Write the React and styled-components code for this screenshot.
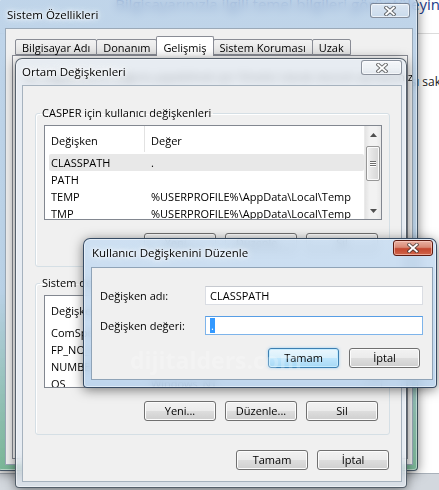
import React from 'react';
import styled, { createGlobalStyle, css } from 'styled-components';

const GlobalStyle = createGlobalStyle`
  html, body { margin: 0; padding: 0; background: #fff; }
  body {
    font-family: "Open Sans", "Noto Sans", sans-serif;
    font-size: 11px;
    color: #000;
  }
  * { box-sizing: border-box; }
`;

const Desktop = styled.div`
  position: relative;
  width: 439px;
  height: 490px;
  overflow: hidden;
  background: #fff;
`;

// page behind the dialogs
const BackPage = styled.div`
  height: 100%;
  display: flex;
  flex-direction: column;
`;

const PageHeading = styled.div`
  align-self: flex-end;
  white-space: nowrap;
  margin: -6px -1px 0 0;
  font-size: 15px;
  line-height: 20px;
  color: #1e3c8c;
`;

const PageRule = styled.div`
  height: 1px;
  margin-top: 19px;
  background: #dcdcdc;
`;

const PageNote = styled.div`
  align-self: flex-end;
  white-space: nowrap;
  margin: 40px -2px 0 0;
  font-size: 12px;
  line-height: 16px;
  color: #1a1a1a;
`;

const PageFill = styled.div`
  flex: 1;
`;

const PageBand = styled.div`
  height: 17px;
  background: #d3d8de;
  border-top: 1px solid #a9b1ba;
`;

const Frame = styled.div`
  position: absolute;
  left: ${p => p.$g.x}px;
  top: ${p => p.$g.y}px;
  width: ${p => p.$g.w}px;
  height: ${p => p.$g.h}px;
  display: flex;
  flex-direction: column;
  border: 1px solid ${p => p.$edge};
  border-radius: 7px 7px 4px 4px;
  background: ${p => p.$glass};
  backdrop-filter: blur(4px);
  box-shadow: inset 0 0 0 1px rgba(255, 255, 255, 0.45), 0 2px 12px rgba(0, 0, 0, 0.5);
`;

const TitleBar = styled.div`
  flex: none;
  height: ${p => p.$g.title}px;
  display: flex;
  align-items: flex-start;
  justify-content: space-between;
  padding: 0 ${p => p.$g.pr}px 0 ${p => p.$g.pl}px;
`;

const Caption = styled.div`
  margin-top: ${p => p.$top}px;
  font-size: 11.5px;
  line-height: 16px;
  white-space: nowrap;
  text-shadow: 0 0 8px #fff, 0 0 5px #fff, 0 0 3px #fff;
`;

const CloseButton = styled.div`
  flex: none;
  width: ${p => p.$w}px;
  height: ${p => p.$h}px;
  margin-top: ${p => p.$top}px;
  display: flex;
  align-items: center;
  justify-content: center;
  border-radius: 3px;
  ${p => p.$active
    ? css`
        border: 1px solid #5b1a10;
        background: linear-gradient(180deg, #eab1a3 0%, #d98a76 45%, #c4472f 55%, #d0654a 100%);
        box-shadow: inset 0 0 0 1px rgba(255, 210, 200, 0.6);
      `
    : css`
        border: 1px solid rgba(60, 70, 85, 0.55);
        background: linear-gradient(180deg, rgba(255, 255, 255, 0.55), rgba(235, 240, 245, 0.25));
        box-shadow: inset 0 0 0 1px rgba(255, 255, 255, 0.6);
      `}
`;

const Client = styled.div`
  flex: 1;
  min-height: 0;
  display: flex;
  flex-direction: column;
  margin: 0 ${p => p.$g.mr}px ${p => p.$g.mb}px ${p => p.$g.ml}px;
  background: #f0f0f0;
  border: 1px solid ${p => p.$line};
  overflow: hidden;
`;

const CloseGlyph = () => (
  <svg width="12" height="10" viewBox="0 0 12 10">
    <path d="M2.2 1.6 L9.8 8.4 M9.8 1.6 L2.2 8.4" stroke="#333" strokeOpacity="0.7" strokeWidth="3.8" strokeLinecap="square" />
    <path d="M2.2 1.6 L9.8 8.4 M9.8 1.6 L2.2 8.4" stroke="#fff" strokeWidth="1.9" strokeLinecap="square" />
  </svg>
);

const Win = ({ g, title, active, glass, edge, line, children }) => (
  <Frame $g={g} $glass={glass} $edge={edge}>
    <TitleBar $g={g}>
      <Caption $top={g.textTop}>{title}</Caption>
      <CloseButton $active={active} $w={g.closeW} $h={g.closeH} $top={g.closeTop}>
        <CloseGlyph />
      </CloseButton>
    </TitleBar>
    <Client $g={g} $line={line}>{children}</Client>
  </Frame>
);

/* ---------- Sistem Özellikleri ---------- */

const SysBody = styled.div`
  flex: 1;
  display: flex;
  flex-direction: column;
  padding: 7px 4px 5px 6px;
`;

const TabStrip = styled.div`
  display: flex;
  align-items: flex-end;
  height: 19px;
  padding-left: 4px;
`;

const Tab = styled.div`
  height: ${p => (p.$on ? 20 : 16)}px;
  margin-left: -1px;
  margin-bottom: ${p => (p.$on ? -1 : 0)}px;
  padding: ${p => (p.$on ? '1px 6px 0' : '0 6px')};
  display: flex;
  align-items: center;
  border: 1px solid #898c95;
  border-bottom: ${p => (p.$on ? 'none' : '1px solid #898c95')};
  border-radius: 2px 2px 0 0;
  background: ${p => (p.$on ? '#fff' : 'linear-gradient(180deg, #f2f2f2, #e3e3e3)')};
  position: relative;
  z-index: ${p => (p.$on ? 1 : 0)};
  white-space: nowrap;
`;

const TabPanel = styled.div`
  flex: 1;
  border: 1px solid #898c95;
  background: #fff;
  padding: 13px 12px;
  white-space: nowrap;
`;

/* ---------- Ortam Değişkenleri ---------- */

const EnvBody = styled.div`
  flex: 1;
  display: flex;
  flex-direction: column;
  padding: 19px 11px 0 12px;
`;

const Group = styled.fieldset`
  margin: 0 0 ${p => p.$gap || 0}px;
  padding: 4px 7px 13px 8px;
  border: 1px solid #d5dfe5;
  border-radius: 3px;
  box-shadow: inset 1px 1px 0 #fff;
  min-width: 0;
`;

const GroupLabel = styled.legend`
  margin-left: -4px;
  padding: 0 2px;
  line-height: 16px;
`;

const List = styled.div`
  height: ${p => p.$h}px;
  display: flex;
  border: 1px solid #828790;
  background: #fff;
  overflow: hidden;
`;

const ListMain = styled.div`
  flex: 1;
  min-width: 0;
  overflow: hidden;
`;

const ListHeader = styled.div`
  height: 26px;
  display: flex;
  align-items: stretch;
`;

const HeadCell = styled.div`
  width: ${p => (p.$first ? '100px' : 'auto')};
  flex: ${p => (p.$first ? 'none' : '1')};
  display: flex;
  align-items: flex-end;
  padding: 0 0 3px 6px;
  border-right: ${p => (p.$first ? '1px solid #e2e2e2' : 'none')};
  line-height: 16px;
`;

const Rows = styled.div`
  margin-top: 2px;
`;

const Row = styled.div`
  height: 17px;
  margin-left: 4px;
  display: flex;
  align-items: center;
  white-space: nowrap;
  background: ${p => (p.$sel ? '#e8e8e8' : 'transparent')};
  border-radius: 2px;
`;

const NameCell = styled.div`
  width: 96px;
  flex: none;
  padding-left: 2px;
  overflow: hidden;
`;

const ValueCell = styled.div`
  flex: 1;
  padding-left: 6px;
  overflow: hidden;
`;

const ScrollBar = styled.div`
  width: 17px;
  flex: none;
  display: flex;
  flex-direction: column;
  background: linear-gradient(90deg, #e3e3e3, #f2f2f2 30%, #f2f2f2 70%, #e8e8e8);
  border-left: 1px solid #eaeaea;
`;

const ScrollArrow = styled.div`
  height: 17px;
  flex: none;
  display: flex;
  align-items: center;
  justify-content: center;
`;

const ScrollTrack = styled.div`
  flex: 1;
  padding: 3px 1px 0;
`;

const Thumb = styled.div`
  height: 35px;
  border: 1px solid #979797;
  border-radius: 2px;
  background: linear-gradient(90deg, #f1f1f1, #e2e2e2 50%, #d6d6d6);
  box-shadow: inset 0 0 0 1px #fafafa;
  display: flex;
  flex-direction: column;
  align-items: center;
  justify-content: center;
  gap: 1px;
`;

const Grip = styled.div`
  width: 6px;
  height: 1px;
  background: #6d6d6d;
  box-shadow: 0 1px 0 #fff;
`;

const Arrow = ({ down }) => (
  <svg width="7" height="4" viewBox="0 0 7 4">
    <path d={down ? 'M0 0H7L3.5 4Z' : 'M0 4H7L3.5 0Z'} fill="#4f4f4f" />
  </svg>
);

const ButtonRow = styled.div`
  display: flex;
  justify-content: flex-end;
  gap: ${p => p.$gap}px;
  margin-top: ${p => p.$top}px;
  padding-right: ${p => p.$right}px;
`;

const Button = styled.div`
  width: ${p => p.$w || 72}px;
  height: 20px;
  display: flex;
  align-items: center;
  justify-content: center;
  border-radius: 3px;
  line-height: 16px;
  ${p => p.$default
    ? css`
        border: 1px solid #3c7fb1;
        background: linear-gradient(180deg, #eaf6fd 0%, #d9f0fc 48%, #bee6fd 52%, #a7d9f5 100%);
        box-shadow: inset 0 0 0 1px #c6ecff, 0 0 3px rgba(96, 180, 240, 0.6);
      `
    : css`
        border: 1px solid #707070;
        background: linear-gradient(180deg, #f2f2f2 0%, #ebebeb 48%, #dddddd 52%, #cfcfcf 100%);
        box-shadow: inset 0 0 0 1px #fcfcfc;
      `}
`;

/* ---------- Kullanıcı Değişkenini Düzenle ---------- */

const EditBody = styled.div`
  flex: 1;
  display: flex;
  flex-direction: column;
  padding: 18px 9px 0 8px;
`;

const FieldGrid = styled.div`
  display: grid;
  grid-template-columns: 105px 1fr;
  row-gap: 11px;
  align-items: center;
`;

const Input = styled.div`
  height: 19px;
  display: flex;
  align-items: center;
  padding-left: 4px;
  background: #fff;
  border: 1px solid ${p => (p.$focus ? '#7eb4ea' : '#dadde3')};
  border-top-color: ${p => (p.$focus ? '#569de5' : '#c6c9cf')};
  line-height: 16px;
`;

const Selected = styled.span`
  background: #3399ff;
  color: #fff;
  padding: 0 1px;
  line-height: 15px;
`;

const Watermark = styled.div`
  position: absolute;
  left: 130px;
  top: 344px;
  font-family: "Open Sans", sans-serif;
  font-weight: 700;
  font-size: 23px;
  color: rgba(255, 255, 255, 0.22);
  pointer-events: none;
`;

const sysGeo = { x: -3, y: -3, w: 421, h: 474, title: 30, pl: 9, pr: 7, textTop: 9, closeTop: 5, closeW: 40, closeH: 15, ml: 7, mr: 4, mb: 5 };
const envGeo = { x: 15, y: 58, w: 392, h: 430, title: 26, pl: 6, pr: 4, textTop: 5, closeTop: 1, closeW: 41, closeH: 15, ml: 6, mr: 4, mb: 5 };
const editGeo = { x: 83, y: 238, w: 354, h: 150, title: 28, pl: 8, pr: 3, textTop: 6, closeTop: 1, closeW: 40, closeH: 16, ml: 7, mr: 3, mb: 7 };

const userVars = [
  ['CLASSPATH', '.'],
  ['PATH', ''],
  ['TEMP', '%USERPROFILE%\\AppData\\Local\\Temp'],
  ['TMP', '%USERPROFILE%\\AppData\\Local\\Temp'],
];

const systemVars = [
  ['ComSpec', '%SystemRoot%\\system32\\cmd.exe'],
  ['FP_NO_HOST_CHECK', 'NO'],
  ['NUMBER_OF_PROCESSORS', '2'],
  ['OS', 'Windows_NT'],
  ['Path', '%SystemRoot%\\system32;%SystemRoot%'],
];

const VarList = ({ h, rows, selected }) => (
  <List $h={h}>
    <ListMain>
      <ListHeader>
        <HeadCell $first>Değişken</HeadCell>
        <HeadCell>Değer</HeadCell>
      </ListHeader>
      <Rows>
        {rows.map(([name, value], i) => (
          <Row key={name} $sel={i === selected}>
            <NameCell>{name}</NameCell>
            <ValueCell>{value}</ValueCell>
          </Row>
        ))}
      </Rows>
    </ListMain>
    <ScrollBar>
      <ScrollArrow><Arrow /></ScrollArrow>
      <ScrollTrack>
        <Thumb><Grip /><Grip /><Grip /></Thumb>
      </ScrollTrack>
      <ScrollArrow><Arrow down /></ScrollArrow>
    </ScrollBar>
  </List>
);

const ListButtons = () => (
  <ButtonRow $gap={9} $top={13} $right={4}>
    <Button>Yeni...</Button>
    <Button>Düzenle...</Button>
    <Button>Sil</Button>
  </ButtonRow>
);

const tabs = ['Bilgisayar Adı', 'Donanım', 'Gelişmiş', 'Sistem Koruması', 'Uzak'];

export default function App() {
  return (
    <>
      <GlobalStyle />
      <Desktop>
        <BackPage>
          <PageHeading>Bilgisayarınızla ilgili temel bilgileri görüntüleyin</PageHeading>
          <PageRule />
          <PageNote>Windows ürün anahtarını ve lisansı sak</PageNote>
          <PageFill />
          <PageBand />
        </BackPage>

        <Win
          g={sysGeo}
          title="Sistem Özellikleri"
          glass="linear-gradient(180deg, rgba(176,202,228,0.8) 0%, rgba(168,198,224,0.8) 62%, rgba(104,172,136,0.88) 100%)"
          edge="rgba(40,55,70,0.8)"
          line="#9aa9b8"
        >
          <SysBody>
            <TabStrip>
              {tabs.map(t => (
                <Tab key={t} $on={t === 'Gelişmiş'}>{t}</Tab>
              ))}
            </TabStrip>
            <TabPanel>
              Bu değişikliklerin çoğunu yapabilmek için Yönetici olarak oturum açmalısınız.
            </TabPanel>
          </SysBody>
        </Win>

        <Win
          g={envGeo}
          title="Ortam Değişkenleri"
          glass="rgba(222,229,237,0.72)"
          edge="rgba(50,62,75,0.8)"
          line="#a6b2be"
        >
          <EnvBody>
            <Group $gap={8}>
              <GroupLabel>CASPER için kullanıcı değişkenleri</GroupLabel>
              <VarList h={95} rows={userVars} selected={0} />
              <ListButtons />
            </Group>
            <Group>
              <GroupLabel>Sistem değişkenleri</GroupLabel>
              <VarList h={93} rows={systemVars} selected={-1} />
              <ListButtons />
            </Group>
            <ButtonRow $gap={9} $top={15} $right={1}>
              <Button>Tamam</Button>
              <Button>İptal</Button>
            </ButtonRow>
          </EnvBody>
        </Win>

        <Win
          g={editGeo}
          title="Kullanıcı Değişkenini Düzenle"
          active
          glass="linear-gradient(180deg, rgba(200,221,242,0.86) 0%, rgba(182,208,235,0.86) 100%)"
          edge="rgba(30,50,75,0.85)"
          line="#8fa3b7"
        >
          <EditBody>
            <FieldGrid>
              <span>Değişken adı:</span>
              <Input>CLASSPATH</Input>
              <span>Değişken değeri:</span>
              <Input $focus><Selected>.</Selected></Input>
            </FieldGrid>
            <ButtonRow $gap={10} $top={13} $right={3}>
              <Button $w={71} $default>Tamam</Button>
              <Button $w={71}>İptal</Button>
            </ButtonRow>
          </EditBody>
        </Win>

        <Watermark>dijitalders.com</Watermark>
      </Desktop>
    </>
  );
}
